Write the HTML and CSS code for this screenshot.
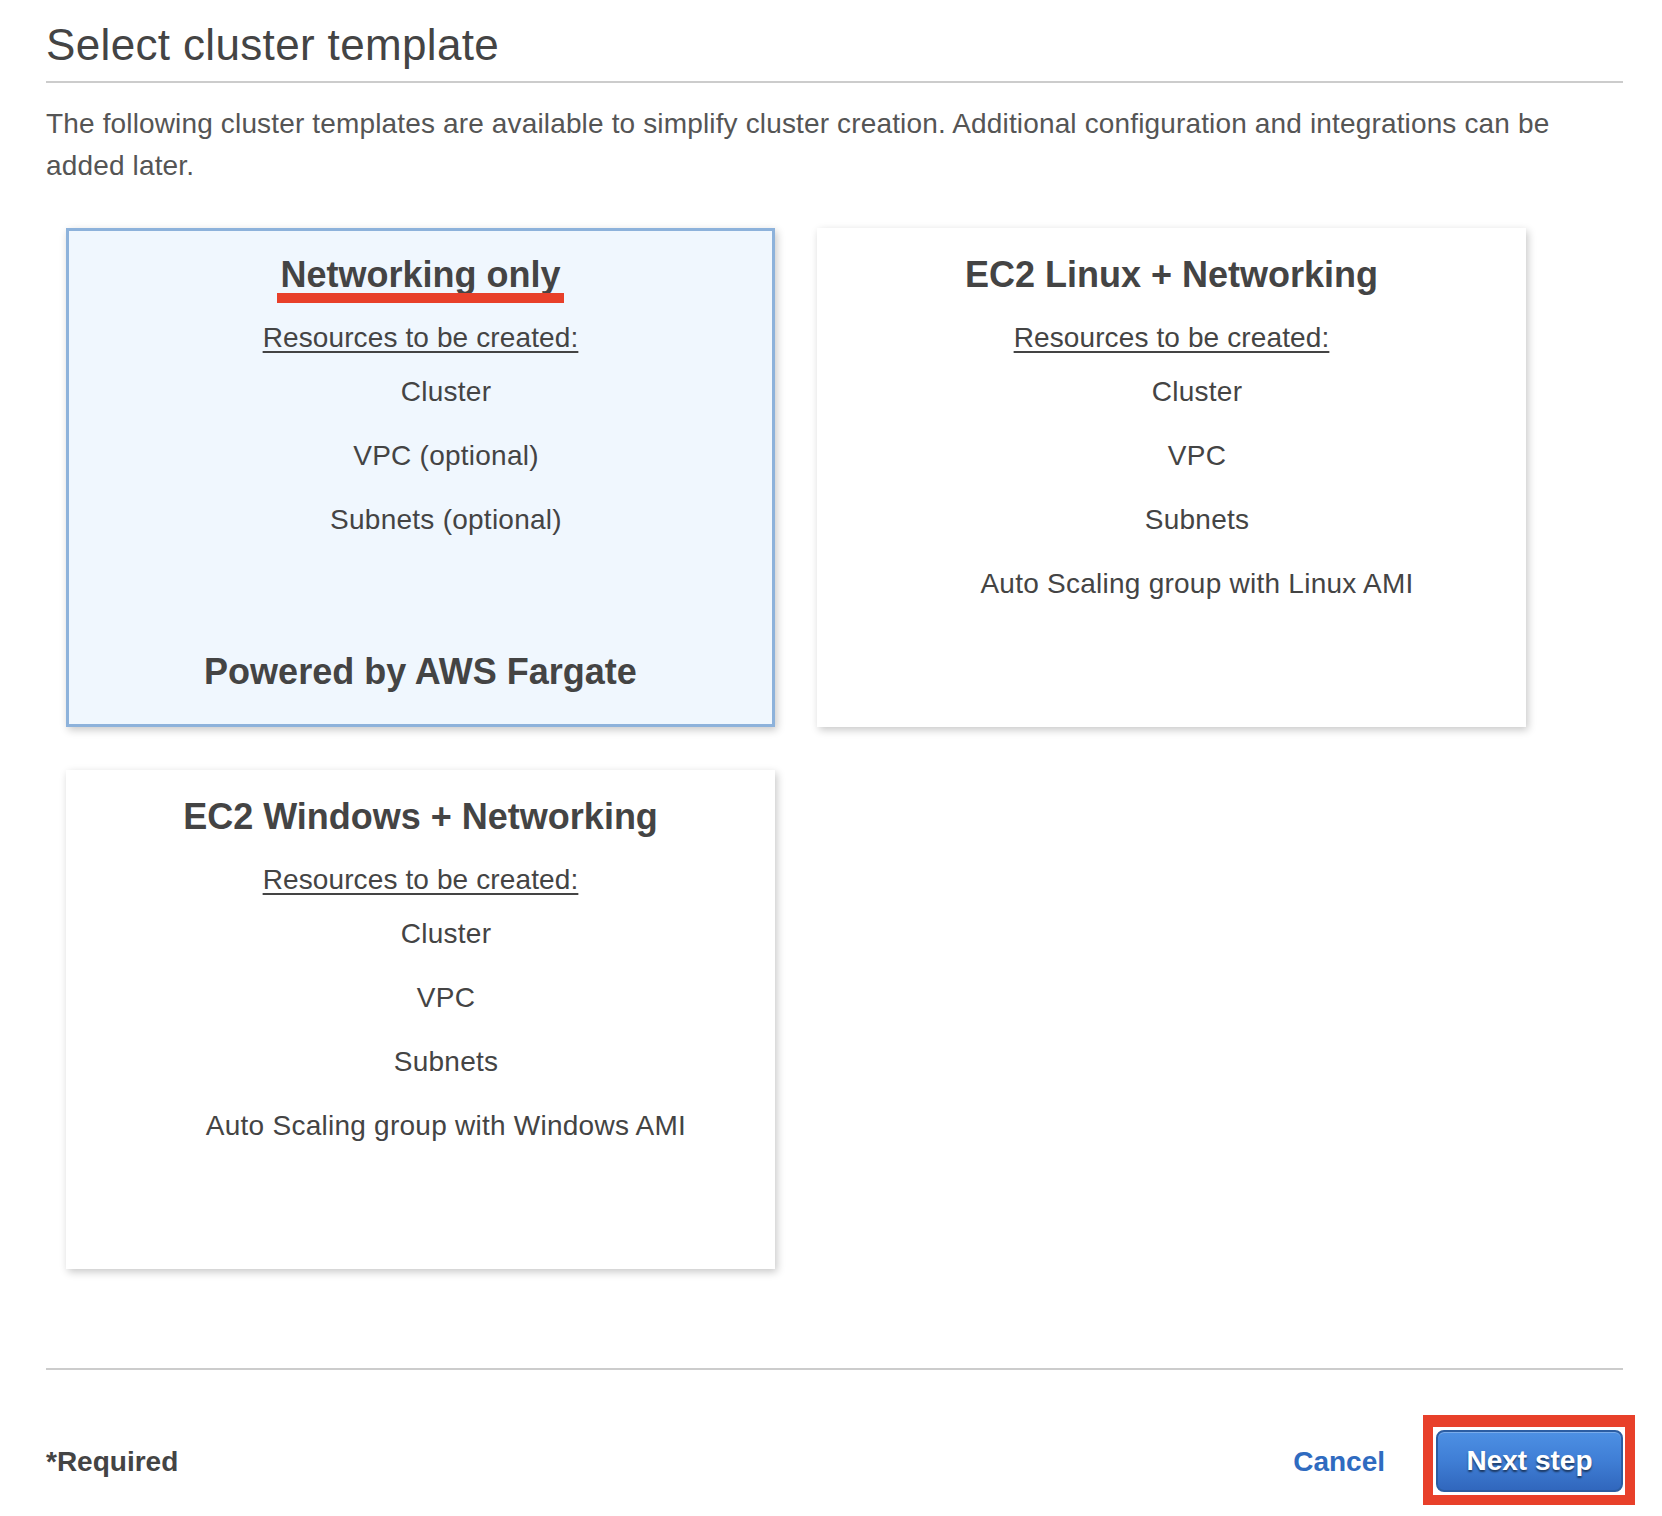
FILE: index.html
```html
<!DOCTYPE html>
<html lang="en">
<head>
<meta charset="utf-8">
<title>Select cluster template</title>
<link rel="stylesheet" href="styles.css">
</head>
<body>
<div class="page">
  <h1 class="page-title">Select cluster template</h1>
  <p class="intro">The following cluster templates are available to simplify cluster creation. Additional configuration and integrations can be added later.</p>

  <div class="cards">
    <div class="card card-selected">
      <h2 class="card-title"><span class="marked">Networking only</span></h2>
      <div class="res-label">Resources to be created:</div>
      <ul class="res-list">
        <li>Cluster</li>
        <li>VPC (optional)</li>
        <li>Subnets (optional)</li>
      </ul>
      <div class="card-foot">Powered by AWS Fargate</div>
    </div>

    <div class="card">
      <h2 class="card-title">EC2 Linux + Networking</h2>
      <div class="res-label">Resources to be created:</div>
      <ul class="res-list">
        <li>Cluster</li>
        <li>VPC</li>
        <li>Subnets</li>
        <li>Auto Scaling group with Linux AMI</li>
      </ul>
    </div>

    <div class="card">
      <h2 class="card-title">EC2 Windows + Networking</h2>
      <div class="res-label">Resources to be created:</div>
      <ul class="res-list">
        <li>Cluster</li>
        <li>VPC</li>
        <li>Subnets</li>
        <li>Auto Scaling group with Windows AMI</li>
      </ul>
    </div>
  </div>

  <div class="footer">
    <span class="required">*Required</span>
    <a class="cancel" href="#">Cancel</a>
    <span class="callout"><button class="btn-primary" type="button">Next step</button></span>
  </div>
</div>
</body>
</html>
```

FILE: styles.css
```css
html, body {
  margin: 0;
  padding: 0;
  background: #ffffff;
}

body {
  font-family: "Liberation Sans", Arial, Helvetica, sans-serif;
  color: #444444;
}

.page {
  padding: 0 39px 0 46px;
}

.page-title {
  margin: 0;
  padding: 19px 0 10px;
  font-size: 44px;
  line-height: 52px;
  font-weight: normal;
  letter-spacing: 0.35px;
  color: #444444;
  border-bottom: 2px solid #cccccc;
}

.intro {
  margin: 20px 0 0;
  padding-right: 40px;
  font-size: 28px;
  line-height: 42px;
  letter-spacing: 0.15px;
  color: #555555;
}

.cards {
  display: grid;
  grid-template-columns: 709px 709px;
  grid-auto-rows: 499px;
  column-gap: 42px;
  row-gap: 43px;
  margin-top: 41px;
  padding-left: 20px;
}

.card {
  box-sizing: border-box;
  display: flex;
  flex-direction: column;
  align-items: center;
  text-align: center;
  padding: 22px 0 30px;
  background: #ffffff;
  border: 3px solid transparent;
  box-shadow: 2px 3px 8px rgba(0, 0, 0, 0.22);
}

.card-selected {
  background: #f0f7fe;
  border-color: #8db2db;
}

.card-title {
  margin: 0;
  font-size: 36px;
  line-height: 44px;
  font-weight: bold;
  color: #444444;
}

.marked {
  position: relative;
}

.marked::after {
  content: "";
  position: absolute;
  left: -3px;
  right: -3px;
  top: 39px;
  height: 10px;
  background: #e8402a;
}

.res-label {
  margin-top: 21px;
  font-size: 28px;
  line-height: 40px;
  letter-spacing: 0.12px;
  color: #444444;
  text-decoration: underline;
  text-decoration-thickness: 2px;
  text-underline-offset: 4px;
}

.res-list {
  align-self: stretch;
  list-style: none;
  margin: 14px 0 0;
  padding: 0 0 0 51px;
}

.res-list li {
  font-size: 28px;
  line-height: 40px;
  letter-spacing: 0.25px;
  margin-bottom: 24px;
  color: #444444;
}

.card-foot {
  margin-top: auto;
  font-size: 36px;
  line-height: 44px;
  font-weight: bold;
  color: #444444;
}

.footer {
  display: flex;
  align-items: center;
  margin-top: 99px;
  padding-top: 45px;
  border-top: 2px solid #cccccc;
}

.required {
  flex: 1;
  padding-top: 4px;
  font-size: 28px;
  line-height: 40px;
  font-weight: bold;
  color: #444444;
}

.cancel {
  padding-top: 4px;
  margin-right: 38px;
  font-size: 28px;
  line-height: 40px;
  font-weight: bold;
  color: #2f6bc0;
  text-decoration: none;
}

.callout {
  display: inline-flex;
  border-style: solid;
  border-color: #e8402a;
  border-width: 12px 10px 10px 10px;
  padding: 3px 2px 3px 3px;
  margin-right: -12px;
  background: #ffffff;
}

.btn-primary {
  box-sizing: border-box;
  width: 187px;
  height: 62px;
  padding: 0;
  border: 2px solid #2b5da3;
  border-radius: 8px;
  background: linear-gradient(to bottom, #4d90e4 0%, #3f7ed5 50%, #3167bd 100%);
  box-shadow: inset 0 1px 0 rgba(255, 255, 255, 0.25);
  font-family: "Liberation Sans", Arial, Helvetica, sans-serif;
  font-size: 28px;
  line-height: 40px;
  font-weight: bold;
  color: #ffffff;
  text-shadow: 0 2px 2px rgba(0, 0, 0, 0.55);
}
```
